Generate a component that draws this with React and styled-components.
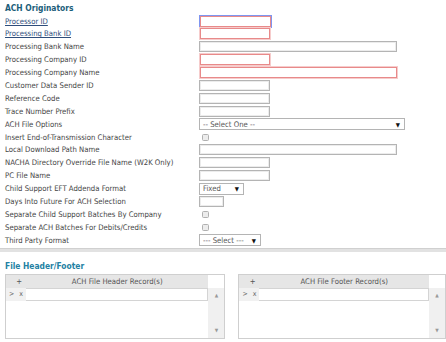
import styled, { createGlobalStyle } from "styled-components";

const GlobalStyle = createGlobalStyle`
  body {
    margin: 0;
    background: #ffffff;
    font-family: "DejaVu Sans Condensed", "Liberation Sans", Arial, sans-serif;
    overflow: hidden;
  }
`;

const Page = styled.div`
  width: 446px;
  height: 342px;
  overflow: hidden;
`;

const SectionTitle = styled.div`
  height: ${(p) => p.$h}px;
  box-sizing: border-box;
  padding: ${(p) => p.$pt}px 0 0 5px;
  font-size: 8.4px;
  line-height: 10px;
  font-weight: bold;
  color: ${(p) => p.$color};
`;

const Form = styled.div`
  display: grid;
  grid-template-columns: 194px 1fr;
  grid-auto-rows: 12.9px;
  align-items: center;
  padding-left: 5px;
`;

const Label = styled.div`
  font-size: 7.7px;
  color: #444;
  white-space: nowrap;
  ${(p) =>
    p.$link &&
    `
    color: #2e4d7b;
    text-decoration: underline;
  `}
`;

const Field = styled.div`
  display: flex;
  align-items: center;
  height: 12.9px;
`;

const Input = styled.div`
  box-sizing: border-box;
  width: ${(p) => p.$w}px;
  height: 11px;
  background: #fff;
  border: 1px solid ${(p) => (p.$required ? "#e88a8a" : "#b4b4b4")};
  box-shadow: ${(p) =>
    p.$focus
      ? "0 0 0 1px #7f95f0"
      : p.$required
      ? "0 0 0 1px #f6cccc"
      : "inset 0 0 0 1px #ececec"};
  margin-left: ${(p) => (p.$required ? 1 : 0)}px;
`;

const Select = styled.div`
  box-sizing: border-box;
  width: ${(p) => p.$w}px;
  height: 12px;
  border: 1px solid #b4b4b4;
  background: #fff;
  display: flex;
  align-items: center;
  justify-content: space-between;
  padding: 0 4px 0 3px;
  font-size: 7.7px;
  color: #555;
`;

const Arrow = styled.span`
  font-size: 6px;
  color: #111;
`;

const Check = styled.div`
  box-sizing: border-box;
  width: 7px;
  height: 7px;
  margin-left: 3px;
  border: 1px solid #b0b0b0;
  border-radius: 1.5px;
  background: #ececec;
`;

const Divider = styled.div`
  margin-top: 1px;
  height: 3px;
  background: #e2e2e2;
  border-top: 1px solid #d0d0d0;
`;

const Panels = styled.div`
  display: flex;
  gap: 13px;
  padding-left: 5px;
`;

const Panel = styled.div`
  box-sizing: border-box;
  width: ${(p) => p.$w}px;
  height: 65px;
  border: 1px solid #cfcfcf;
  display: grid;
  grid-template-columns: 20px 1fr 16px;
  grid-template-rows: 13px 13px 1fr;
`;

const HeadCell = styled.div`
  background: #e6e6e6;
  display: flex;
  align-items: center;
  justify-content: ${(p) => (p.$center ? "center" : "flex-end")};
  padding: ${(p) => (p.$center ? "0" : "0 4px 0 0")};
  font-size: 7.7px;
  color: #555;
`;

const Corner = styled.div`
  background: #fff;
`;

const RowTools = styled.div`
  background: #f1f1f1;
  display: flex;
  align-items: center;
  gap: 5px;
  padding-left: 3px;
  font-size: 7px;
  color: #666;
`;

const Cell = styled.div`
  background: #fff;
  border: 1px solid #d4d4d4;
  border-left: none;
`;

const ScrollBar = styled.div`
  grid-column: 3;
  grid-row: 2 / 4;
  background: #f0f0f0;
  display: flex;
  flex-direction: column;
  align-items: center;
  justify-content: space-between;
  padding: 4px 0 5px;
  font-size: 5px;
  color: #999;
`;

const Blank = styled.div`
  grid-column: 1 / 3;
`;

const rows = [
  { label: "Processor ID", link: true, kind: "input", w: 71, required: true, focus: true },
  { label: "Processing Bank ID", link: true, kind: "input", w: 70, required: true },
  { label: "Processing Bank Name", kind: "input", w: 198 },
  { label: "Processing Company ID", kind: "input", w: 70, required: true },
  { label: "Processing Company Name", kind: "input", w: 197, required: true },
  { label: "Customer Data Sender ID", kind: "input", w: 71 },
  { label: "Reference Code", kind: "input", w: 71 },
  { label: "Trace Number Prefix", kind: "input", w: 71 },
  { label: "ACH File Options", kind: "select", w: 206, text: "-- Select One --" },
  { label: "Insert End-of-Transmission Character", kind: "check" },
  { label: "Local Download Path Name", kind: "input", w: 198 },
  { label: "NACHA Directory Override File Name (W2K Only)", kind: "input", w: 71 },
  { label: "PC File Name", kind: "input", w: 71 },
  { label: "Child Support EFT Addenda Format", kind: "select", w: 45, text: "Fixed" },
  { label: "Days Into Future For ACH Selection", kind: "input", w: 25 },
  { label: "Separate Child Support Batches By Company", kind: "check" },
  { label: "Separate ACH Batches For Debits/Credits", kind: "check" },
  { label: "Third Party Format", kind: "select", w: 62, text: "--- Select ---" },
];

const renderField = (r) => {
  if (r.kind === "select")
    return (
      <Select $w={r.w}>
        <span>{r.text}</span>
        <Arrow>▼</Arrow>
      </Select>
    );
  if (r.kind === "check") return <Check />;
  return <Input $w={r.w} $required={r.required} $focus={r.focus} />;
};

const RecordPanel = ({ w, title }) => (
  <Panel $w={w}>
    <HeadCell>+</HeadCell>
    <HeadCell $center>{title}</HeadCell>
    <Corner />
    <RowTools>
      <span>&gt;</span>
      <span>x</span>
    </RowTools>
    <Cell />
    <ScrollBar>
      <span>▲</span>
      <span>▼</span>
    </ScrollBar>
    <Blank />
  </Panel>
);

const App = () => {
  return (
    <Page>
      <GlobalStyle />
      <SectionTitle $h={14.6} $pt={3} $color="#1b5d79">
        ACH Originators
      </SectionTitle>
      <Form>
        {rows.map((r) => (
          <>
            <Label $link={r.link}>{r.label}</Label>
            <Field>{renderField(r)}</Field>
          </>
        ))}
      </Form>
      <Divider />
      <SectionTitle $h={22} $pt={9} $color="#2381a3">
        File Header/Footer
      </SectionTitle>
      <Panels>
        <RecordPanel w={221} title="ACH File Header Record(s)" />
        <RecordPanel w={208} title="ACH File Footer Record(s)" />
      </Panels>
    </Page>
  );
};

export default App;
